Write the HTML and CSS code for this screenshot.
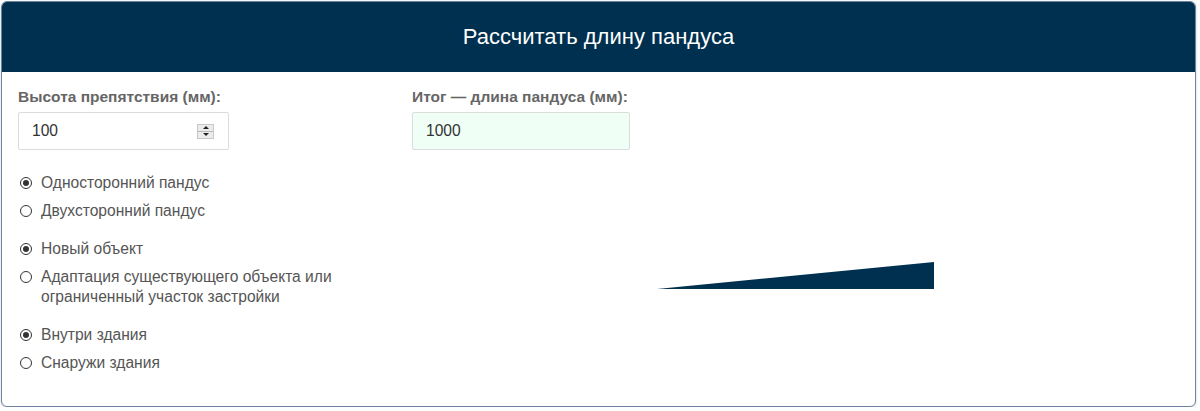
FILE: index.html
```html
<!DOCTYPE html>
<html lang="ru">
<head>
<meta charset="utf-8">
<title>Рассчитать длину пандуса</title>
<link rel="stylesheet" href="styles.css">
</head>
<body>
<div class="panel">
  <div class="panel-head">Рассчитать длину пандуса</div>
  <div class="panel-body">
    <div class="col-left">
      <div class="field-label">Высота препятствия (мм):</div>
      <div class="input">
        <span class="input-value">100</span>
        <span class="spinner"><span class="spin-up"></span><span class="spin-down"></span></span>
      </div>
      <div class="group first">
        <div class="radio"><span class="dot checked"></span><span class="radio-text">Односторонний пандус</span></div>
        <div class="radio"><span class="dot"></span><span class="radio-text">Двухсторонний пандус</span></div>
      </div>
      <div class="group">
        <div class="radio"><span class="dot checked"></span><span class="radio-text">Новый объект</span></div>
        <div class="radio"><span class="dot"></span><span class="radio-text">Адаптация существующего объекта или ограниченный участок застройки</span></div>
      </div>
      <div class="group">
        <div class="radio"><span class="dot checked"></span><span class="radio-text">Внутри здания</span></div>
        <div class="radio"><span class="dot"></span><span class="radio-text">Снаружи здания</span></div>
      </div>
    </div>
    <div class="col-right">
      <div class="field-label">Итог — длина пандуса (мм):</div>
      <div class="input result"><span class="input-value">1000</span></div>
      <div class="ramp">
        <svg width="277" height="27" viewBox="0 0 277 27"><polygon points="0,27 277,0 277,27" fill="#00304f"/></svg>
      </div>
    </div>
  </div>
</div>
</body>
</html>
```
FILE: styles.css
```css
* { box-sizing: border-box; }
html, body { margin: 0; padding: 0; background: #fff; }
body {
  padding: 1px 4px 0 1px;
  font-family: "Liberation Sans", Arial, sans-serif;
}
.panel {
  width: 1195px;
  height: 406px;
  border: 1px solid #6b84a0;
  border-radius: 6px;
  overflow: hidden;
  box-shadow: 0 1px 3px rgba(0, 0, 0, 0.18);
  background: #fff;
}
.panel-head {
  height: 70px;
  background: #00304f;
  color: #fff;
  font-size: 22px;
  display: flex;
  align-items: center;
  justify-content: center;
  padding-bottom: 1px;
}
.panel-body {
  display: flex;
  padding: 15px 16px 0 16px;
}
.col-left { width: 394px; }
.col-right { flex: 1; }
.field-label {
  font-size: 15.5px;
  font-weight: bold;
  color: #666;
  line-height: 20px;
  margin-bottom: 5px;
}
.input {
  height: 38px;
  border: 1px solid #dcdcdc;
  border-radius: 2px;
  display: flex;
  align-items: center;
  padding: 0 14px 0 13px;
  font-size: 15.6px;
  color: #333;
  width: 211px;
}
.input-value { flex: 1; }
.result { width: 218px; background: #f0fff6; }
.spinner {
  width: 17px;
  height: 15px;
  border: 1px solid #c8c8c8;
  background: #ececec;
  display: flex;
  flex-direction: column;
}
.spin-up, .spin-down {
  flex: 1;
  display: flex;
  align-items: center;
  justify-content: center;
}
.spin-up { border-bottom: 1px solid #b8b8b8; }
.spin-up::after {
  content: "";
  border-left: 3px solid transparent;
  border-right: 3px solid transparent;
  border-bottom: 3px solid #222;
}
.spin-down::after {
  content: "";
  border-left: 3px solid transparent;
  border-right: 3px solid transparent;
  border-top: 3px solid #222;
}
.group { margin-top: 18px; }
.group.first { margin-top: 23px; }
.radio {
  display: flex;
  align-items: flex-start;
  font-size: 15.6px;
  line-height: 20px;
  color: #555;
}
.radio + .radio { margin-top: 8px; }
.dot {
  width: 12px;
  height: 12px;
  border: 1px solid #333;
  border-radius: 50%;
  margin: 4px 9px 0 2px;
  flex: none;
  display: flex;
  align-items: center;
  justify-content: center;
}
.dot.checked::after {
  content: "";
  width: 6px;
  height: 6px;
  border-radius: 50%;
  background: #333;
}
.radio-text { max-width: 330px; }
.ramp {
  margin-top: 112px;
  margin-left: 245px;
  height: 27px;
}
.ramp svg { display: block; }
```
